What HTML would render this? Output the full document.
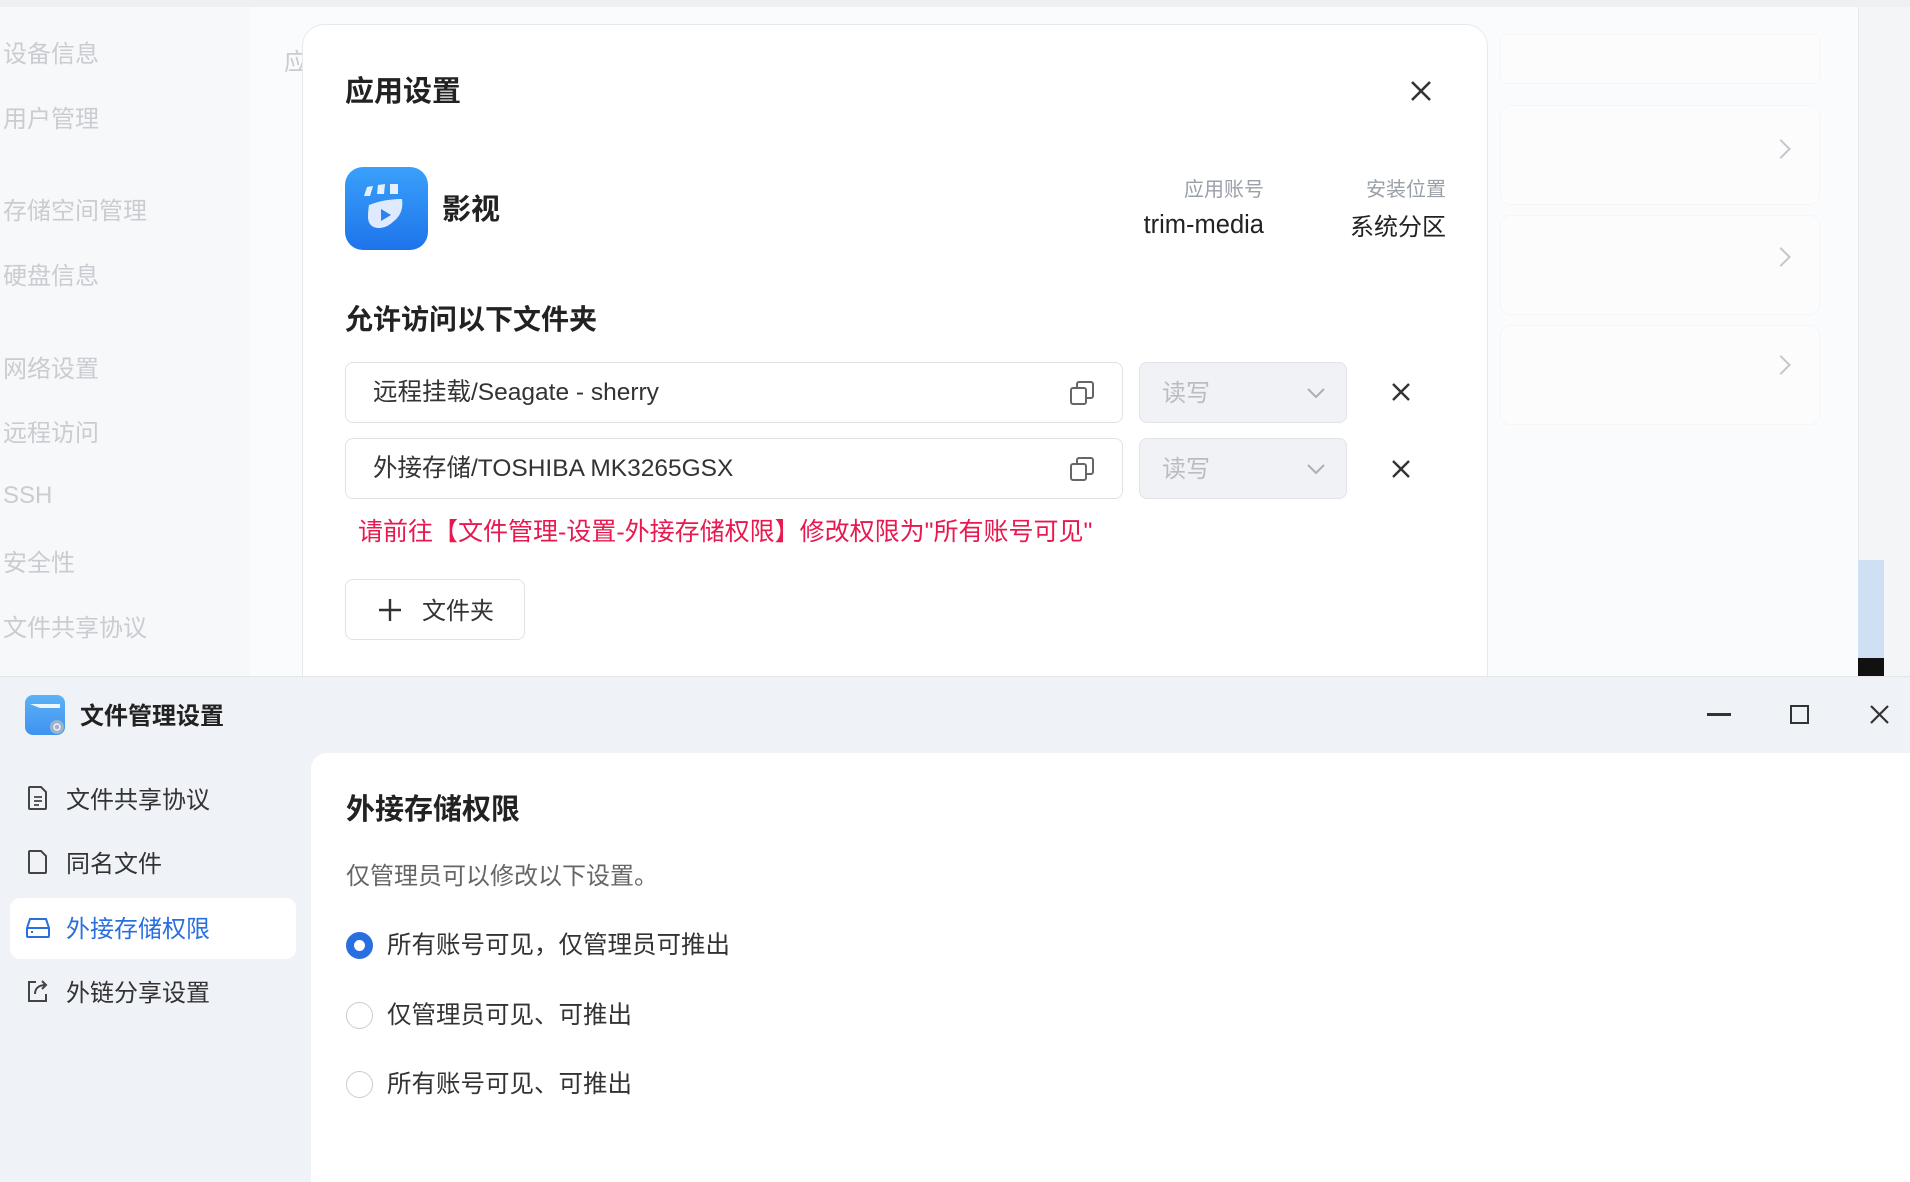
<!DOCTYPE html>
<html><head><meta charset="utf-8"><style>
*{margin:0;padding:0;box-sizing:border-box}
body{width:1910px;height:1182px;overflow:hidden;position:relative;background:#fafbfc;font-family:"Liberation Sans","Noto Sans CJK SC",sans-serif;color:#222}
.a{position:absolute;white-space:nowrap}
.side{color:#c9ccd1;font-size:24px;left:3px}
.row{position:absolute;left:1500px;width:320px;height:100px;border:1px solid #f5f6f7;border-radius:10px;background:#fcfcfd}
.chev{position:absolute;left:1774px;width:14px;height:14px;border-right:2px solid #c4c7cc;border-top:2px solid #c4c7cc;transform:rotate(45deg)}
.inp{position:absolute;left:345px;width:778px;height:61px;border:1.5px solid #dfe2e6;border-radius:8px;background:#fff}
.inp span{position:absolute;left:27px;top:10px;font-size:24.5px;color:#333}
.sel{position:absolute;left:1139px;width:208px;height:61px;border:1.5px solid #e0e3e7;border-radius:8px;background:#f0f2f5}
.sel span{position:absolute;left:22px;top:10px;font-size:24px;color:#b9bdc3}
.navi{position:absolute;left:66px;font-size:24px;color:#333}
.radio{position:absolute;left:346px;width:27px;height:27px;border-radius:50%;border:1.5px solid #c9ccd1;background:#fff}
.rt{position:absolute;left:387px;font-size:24.5px;color:#333}
</style></head><body>
<div class="a" style="left:0;top:0;width:1910px;height:7px;background:#eef0f2"></div>
<div class="a" style="left:0;top:7px;width:250px;height:670px;background:#f7f8fa"></div>
<div class="a side" style="top:34px">设备信息</div>
<div class="a side" style="top:99px">用户管理</div>
<div class="a side" style="top:191px">存储空间管理</div>
<div class="a side" style="top:256px">硬盘信息</div>
<div class="a side" style="top:349px">网络设置</div>
<div class="a side" style="top:413px">远程访问</div>
<div class="a side" style="top:482px">SSH</div>
<div class="a side" style="top:543px">安全性</div>
<div class="a side" style="top:608px">文件共享协议</div>
<div class="a" style="left:284px;top:42px;font-size:24px;color:#c9ccd1">应</div>
<div class="row" style="top:34px;height:50px;border-radius:6px"></div>
<div class="row" style="top:105px"></div><div class="chev" style="top:142px"></div>
<div class="row" style="top:215px"></div><div class="chev" style="top:250px"></div>
<div class="row" style="top:325px"></div><div class="chev" style="top:358px"></div>
<div class="a" style="left:1858px;top:7px;width:52px;height:670px;background:#f4f5f7;border-left:1px solid #e6e8eb"></div>
<div class="a" style="left:1858px;top:560px;width:26px;height:98px;background:#cfe0f4"></div>
<div class="a" style="left:1858px;top:658px;width:26px;height:18px;background:#111"></div>
<!-- modal -->
<div class="a" style="left:302px;top:24px;width:1186px;height:700px;background:#fff;border:1.5px solid #e6e8eb;border-radius:22px"></div>
<div class="a" style="left:345px;top:68px;font-size:29px;font-weight:bold;color:#222">应用设置</div>
<svg class="a" style="left:1409px;top:79px" width="24" height="24" viewBox="0 0 24 24"><path d="M3 3L21 21M21 3L3 21" stroke="#333" stroke-width="2.6"/></svg>
<svg class="a" style="left:345px;top:167px" width="83" height="83" viewBox="0 0 83 83"><defs><linearGradient id="g" x1="0" y1="0" x2="0" y2="1"><stop offset="0" stop-color="#3aa0fb"/><stop offset="1" stop-color="#1e74ea"/></linearGradient></defs><rect width="83" height="83" rx="18" fill="url(#g)"/><path d="M22 20l6-1-3 10h-6zM33 18l7-1-1 10h-7zM45 17h8v10h-8z" fill="#e6efff"/><path d="M24 38q15-6 33-6q2 14-8 22q-7 7-15 7q-10 0-11-10q0-8 1-13z" fill="#dfeaff"/><path d="M36 42l10 6-10 6z" fill="#2a84f0"/></svg>
<div class="a" style="left:442px;top:186px;font-size:29px;font-weight:bold;color:#222">影视</div>
<div class="a" style="left:1164px;top:173px;width:100px;text-align:right;font-size:20px;color:#9aa0a8">应用账号</div>
<div class="a" style="left:1094px;top:211px;width:170px;text-align:right;font-size:25.5px;color:#222">trim-media</div>
<div class="a" style="left:1326px;top:207px;width:120px;text-align:right;font-size:24px;color:#222">系统分区</div>
<div class="a" style="left:1346px;top:173px;width:100px;text-align:right;font-size:20px;color:#9aa0a8">安装位置</div>
<div class="a" style="left:345px;top:298px;font-size:28px;font-weight:bold;color:#222">允许访问以下文件夹</div>
<div class="inp" style="top:362px"><span>远程挂载/Seagate - sherry</span></div>
<div class="inp" style="top:438px"><span>外接存储/TOSHIBA MK3265GSX</span></div>
<svg class="a" style="left:1069px;top:380px" width="26" height="26" viewBox="0 0 26 26"><rect x="2" y="8" width="15" height="16" rx="2" fill="none" stroke="#666" stroke-width="2"/><path d="M8 7V4a2 2 0 012-2h12a2 2 0 012 2v12a2 2 0 01-2 2h-4" fill="none" stroke="#666" stroke-width="2"/></svg>
<svg class="a" style="left:1069px;top:456px" width="26" height="26" viewBox="0 0 26 26"><rect x="2" y="8" width="15" height="16" rx="2" fill="none" stroke="#666" stroke-width="2"/><path d="M8 7V4a2 2 0 012-2h12a2 2 0 012 2v12a2 2 0 01-2 2h-4" fill="none" stroke="#666" stroke-width="2"/></svg>
<div class="sel" style="top:362px"><span>读写</span><svg style="position:absolute;left:166px;top:24px" width="20" height="12" viewBox="0 0 20 12"><path d="M2 2l8 8 8-8" fill="none" stroke="#aab0b8" stroke-width="2"/></svg></div>
<div class="sel" style="top:438px"><span>读写</span><svg style="position:absolute;left:166px;top:24px" width="20" height="12" viewBox="0 0 20 12"><path d="M2 2l8 8 8-8" fill="none" stroke="#aab0b8" stroke-width="2"/></svg></div>
<svg class="a" style="left:1391px;top:382px" width="20" height="20" viewBox="0 0 20 20"><path d="M2 2L18 18M18 2L2 18" stroke="#333" stroke-width="2.4"/></svg>
<svg class="a" style="left:1391px;top:459px" width="20" height="20" viewBox="0 0 20 20"><path d="M2 2L18 18M18 2L2 18" stroke="#333" stroke-width="2.4"/></svg>
<div class="a" style="left:358px;top:512px;font-size:25px;color:#e8194f">请前往【文件管理-设置-外接存储权限】修改权限为"所有账号可见"</div>
<div class="a" style="left:345px;top:579px;width:180px;height:61px;border:1.5px solid #dfe2e6;border-radius:8px;background:#fff"></div>
<svg class="a" style="left:378px;top:598px" width="24" height="24" viewBox="0 0 24 24"><path d="M12 1v22M1 12h22" stroke="#333" stroke-width="2.4"/></svg>
<div class="a" style="left:422px;top:591px;font-size:24px;color:#333">文件夹</div>
<!-- bottom window -->
<div class="a" style="left:0;top:676px;width:1910px;height:506px;background:#eff2f6;border-top:1.5px solid #e2e5e9"></div>
<svg class="a" style="left:24px;top:694px" width="42" height="42" viewBox="0 0 42 42"><defs><linearGradient id="h" x1="0" y1="0" x2="0" y2="1"><stop offset="0" stop-color="#5cb2f7"/><stop offset="1" stop-color="#3f92ef"/></linearGradient></defs><rect x="1" y="1" width="40" height="40" rx="8" fill="url(#h)"/><path d="M6 10h30v4H16z" fill="#fff" opacity=".9"/><circle cx="33" cy="33" r="7" fill="#9db3c8"/><circle cx="33" cy="33" r="3" fill="none" stroke="#eef" stroke-width="1.5"/></svg>
<div class="a" style="left:80px;top:696px;font-size:24px;color:#222;font-weight:bold">文件管理设置</div>
<div class="a" style="left:1707px;top:713px;width:24px;height:2.5px;background:#333"></div>
<div class="a" style="left:1790px;top:705px;width:19px;height:19px;border:2.2px solid #333"></div>
<svg class="a" style="left:1870px;top:705px" width="19" height="19" viewBox="0 0 19 19"><path d="M1 1L18 18M18 1L1 18" stroke="#333" stroke-width="2.2"/></svg>
<div class="a" style="left:311px;top:753px;width:1599px;height:429px;background:#fff;border-top-left-radius:16px"></div>
<div class="a" style="left:10px;top:898px;width:286px;height:61px;background:#fff;border-radius:10px"></div>
<svg class="a" style="left:26px;top:785px" width="24" height="26" viewBox="0 0 24 26"><path d="M4 2h11l5 5v16a1 1 0 01-1 1H4a1 1 0 01-1-1V3a1 1 0 011-1z" fill="none" stroke="#444" stroke-width="2"/><path d="M8 12h8M8 16h8M8 20h5" stroke="#444" stroke-width="1.8"/></svg>
<div class="navi" style="top:780px">文件共享协议</div>
<svg class="a" style="left:26px;top:849px" width="24" height="26" viewBox="0 0 24 26"><path d="M4 2h11l5 5v16a1 1 0 01-1 1H4a1 1 0 01-1-1V3a1 1 0 011-1z" fill="none" stroke="#444" stroke-width="2"/></svg>
<div class="navi" style="top:844px">同名文件</div>
<svg class="a" style="left:25px;top:916px" width="26" height="24" viewBox="0 0 26 24"><path d="M5 3h16l3 9v8a1 1 0 01-1 1H3a1 1 0 01-1-1v-8z" fill="none" stroke="#2a6fe0" stroke-width="2"/><path d="M2 12h22M6 16h2" stroke="#2a6fe0" stroke-width="2"/></svg>
<div class="navi" style="top:909px;color:#2a6fe0">外接存储权限</div>
<svg class="a" style="left:26px;top:978px" width="24" height="26" viewBox="0 0 24 26"><path d="M10 4H3v19h17v-7" fill="none" stroke="#444" stroke-width="2"/><path d="M9 16c0-6 4-9 11-9M16 3l4 4-4 4" fill="none" stroke="#444" stroke-width="2"/></svg>
<div class="navi" style="top:973px">外链分享设置</div>
<div class="a" style="left:346px;top:786px;font-size:29px;font-weight:bold;color:#222">外接存储权限</div>
<div class="a" style="left:346px;top:856px;font-size:24px;color:#666">仅管理员可以修改以下设置。</div>
<div class="radio" style="top:932px;border:8px solid #2a6fe0"></div>
<div class="rt" style="top:926px">所有账号可见，仅管理员可推出</div>
<div class="radio" style="top:1002px"></div>
<div class="rt" style="top:996px">仅管理员可见、可推出</div>
<div class="radio" style="top:1071px"></div>
<div class="rt" style="top:1065px">所有账号可见、可推出</div>
</body></html>
